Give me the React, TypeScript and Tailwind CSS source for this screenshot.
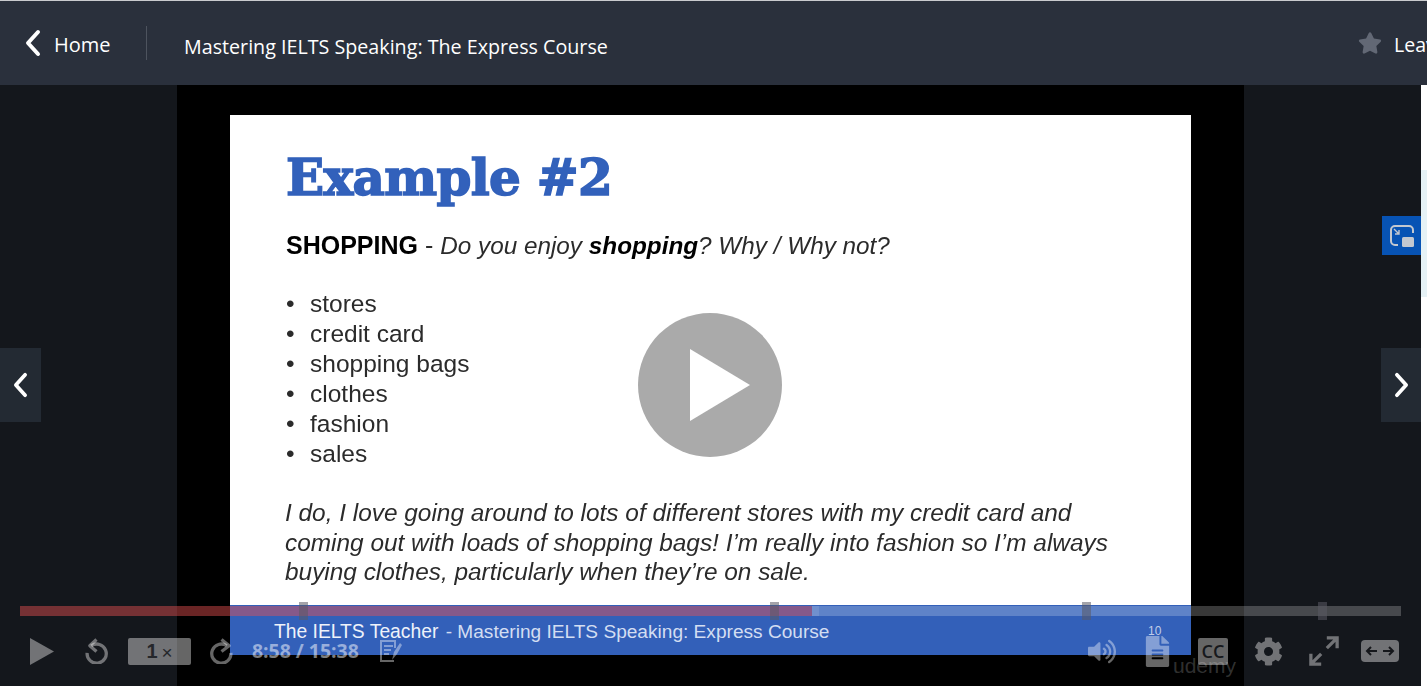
import { FaCog, FaFileAlt, FaStar, FaVolumeUp } from "react-icons/fa";

const bullets = ["stores", "credit card", "shopping bags", "clothes", "fashion", "sales"];
const markers = [303, 774, 1086, 1322];

function Chevron({ dir, className }: { dir: "left" | "right"; className: string }) {
  return (
    <svg viewBox="0 0 16 28" className={className} fill="none" stroke="currentColor" strokeWidth="4" strokeLinecap="round" strokeLinejoin="round">
      <path d={dir === "left" ? "M13 3 3 14l10 11" : "M3 3l10 11L3 25"} />
    </svg>
  );
}

function Header() {
  return (
    <header className="flex h-[85px] shrink-0 items-center overflow-hidden border-t border-[#c9cbce] bg-[#2a303c] font-['Open_Sans',sans-serif] text-white">
      <div className="flex h-[34px] w-[147px] shrink-0 items-center border-r border-[#4d535e] pl-6">
        <Chevron dir="left" className="h-[28px] w-[18px]" />
        <span className="ml-[12px] pt-[3px] text-[20px] leading-none">Home</span>
      </div>
      <h1 className="ml-[37px] whitespace-nowrap pt-[8px] text-[19.7px] font-normal leading-none">Mastering IELTS Speaking: The Express Course</h1>
      <div className="ml-auto flex w-[69px] shrink-0 items-center gap-[12px] overflow-hidden">
        <FaStar className="h-[24px] w-[24px] shrink-0 text-[#626875]" />
        <span className="whitespace-nowrap pt-[3px] text-[19.5px] leading-none">Leave a rating</span>
      </div>
    </header>
  );
}

function Slide() {
  return (
    <div className="flex h-[540px] w-[961px] flex-col bg-white font-['Liberation_Sans',sans-serif] text-[#2b2b2b]">
      <div className="flex-1 pl-[56px] pt-[30px] blur-[0.3px]">
        <h2 className="font-['DejaVu_Serif',serif] text-[50px] font-bold leading-[66px] tracking-[-0.7px] text-[#3261bb] [-webkit-text-stroke:1.6px_#3261bb]">Example #2</h2>
        <p className="mt-[19px] whitespace-nowrap text-[25px] leading-[30px]">
          <b className="text-black">SHOPPING</b> - <i className="text-[24.3px]">Do you enjoy <b className="text-black">shopping</b>? Why / Why not?</i>
        </p>
        <ul className="mt-[28px] text-[24.5px] leading-[30px]">
          {bullets.map((item) => (
            <li key={item} className="flex">
              <span className="w-[24px]">•</span>
              {item}
            </li>
          ))}
        </ul>
        <p className="mt-[29px] -ml-px whitespace-nowrap text-[24.4px] italic leading-[29.5px]">
          I do, I love going around to lots of different stores with my credit card and
          <br />
          coming out with loads of shopping bags! I’m really into fashion so I’m always
          <br />
          buying clothes, particularly when they’re on sale.
        </p>
      </div>
      <div className="h-[50px] shrink-0 whitespace-nowrap bg-[#3360b9] pl-[44px] pt-[16px] text-[19.1px] leading-[22px] text-[#d3def2]">
        <span className="mr-[2px] text-[19.3px] text-[#eef2fa]">The IELTS Teacher</span> - Mastering IELTS Speaking: Express Course
      </div>
    </div>
  );
}

function Controls() {
  return (
    <div className="absolute inset-x-0 bottom-0 h-[81px] font-['Liberation_Sans',sans-serif] text-white/40">
      {/* Progress */}
      <div className="relative mx-[20px] mt-[1px] flex h-[10px]">
        <div className="h-full w-[792px] bg-[rgba(236,82,82,0.45)]" />
        <div className="h-full w-[7px] bg-white/30" />
        <div className="h-full flex-1 bg-white/22" />
        {markers.map((x) => (
          <div key={x} className="absolute top-[-4px] h-[18px] w-[9px] bg-[rgba(90,90,100,0.55)]" style={{ left: x - 24 }} />
        ))}
      </div>

      <div className="relative flex h-[70px] items-center">
        <svg viewBox="0 0 24 27" className="ml-[30px] h-[27px] w-[24px]" fill="currentColor">
          <path d="M0 0v27l24-13.5z" />
        </svg>
        <svg viewBox="0 0 24 26" className="ml-[31px] h-[26px] w-[23px]" fill="none" stroke="currentColor" strokeWidth="3.4">
          <path d="M6.5 7.5A10 10 0 1 1 2.2 15" />
          <path d="M12 1 5 7.5l7 6" fill="none" strokeLinejoin="round" />
        </svg>
        <div className="ml-[20px] flex h-[27px] w-[63px] items-center justify-center rounded-[2px] bg-white/40 text-[20px] font-bold leading-none text-[#25272b]">
          1<span className="ml-[4px] mt-[3px] text-[19px] font-normal">×</span>
        </div>
        <svg viewBox="0 0 24 26" className="ml-[19px] h-[26px] w-[23px]" fill="none" stroke="currentColor" strokeWidth="3.4">
          <path d="M17.5 7.5A10 10 0 1 0 21.8 15" />
          <path d="M12 1l8 6.5-8 6" fill="none" strokeLinejoin="round" />
        </svg>
        <span className="ml-[19px] whitespace-nowrap font-['Open_Sans',sans-serif] text-[19.4px] font-bold leading-none text-white/50">8:58 / 15:38</span>
        <svg viewBox="0 0 24 24" className="ml-[20px] h-[24px] w-[24px]" fill="none" stroke="currentColor" strokeWidth="2">
          <path d="M15 22H2V2h14v7" />
          <path d="M5 7h9M5 11h7M5 15h5" />
          <path d="M13 21l2-8 6-9 2 2-5 9z" fill="currentColor" stroke="none" />
        </svg>

        <FaVolumeUp className="ml-auto h-[27px] w-[28px]" />
        <div className="relative ml-[28px] h-[31px] w-[27px]">
          <span className="absolute left-[4px] top-[-11px] text-[12px] leading-none text-white/70">10</span>
          <FaFileAlt className="h-[31px] w-[27px]" />
        </div>
        <div className="ml-[27px] flex h-[27px] w-[30px] items-center justify-center rounded-[2px] bg-white/40 font-['Open_Sans',sans-serif] text-[18px] font-semibold leading-none text-[#16181c]">
          CC
        </div>
        <FaCog className="ml-[26px] h-[29px] w-[29px]" />
        <svg viewBox="0 0 32 32" className="ml-[26px] h-[30px] w-[30px]" fill="none" stroke="currentColor" strokeWidth="3.5">
          <path d="M19 2h11v11M29 3 19 13M13 30H2V19M3 29l10-10" />
        </svg>
        <svg viewBox="0 0 38 22" className="ml-[22px] mr-[22px] h-[22px] w-[38px]">
          <rect width="38" height="22" rx="4" fill="currentColor" />
          <path d="M10 7l-4 4 4 4M6 11h10M28 7l4 4-4 4M32 11H22" fill="none" stroke="#15171b" strokeWidth="2" />
        </svg>

        <span className="absolute left-[1173px] top-[39px] text-[21px] leading-none text-white/20">udemy</span>
      </div>
    </div>
  );
}

export default function App() {
  return (
    <div className="flex h-[686px] w-[1427px] flex-col overflow-hidden bg-white">
      <Header />
      <div className="flex min-h-0 flex-1">
        <main className="relative flex w-[1421px] shrink-0 bg-[#14171c]">
          <div className="ml-[177px] flex w-[1067px] justify-center bg-black pt-[30px]">
            <Slide />
          </div>

          {/* Big play */}
          <div className="absolute left-[638px] top-[228px] flex h-[144px] w-[144px] items-center justify-center rounded-full bg-[#aaaaaa]">
            <svg viewBox="0 0 60 72" className="ml-[20px] h-[72px] w-[60px]" fill="white">
              <path d="M0 0v72l60-36z" />
            </svg>
          </div>

          <button className="absolute left-0 top-[263px] flex h-[74px] w-[41px] items-center justify-center bg-[#232a33] text-white">
            <Chevron dir="left" className="h-[26px] w-[15px]" />
          </button>
          <button className="absolute right-0 top-[263px] flex h-[74px] w-[40px] items-center justify-center bg-[#232a33] text-white">
            <Chevron dir="right" className="h-[26px] w-[15px]" />
          </button>
          <button className="absolute right-0 top-[131px] flex h-[39px] w-[39px] items-center justify-center bg-[#0753b4]">
            <svg viewBox="0 0 24 22" className="h-[22px] w-[24px]" fill="none" stroke="#c3c8d0" strokeWidth="2">
              <path d="M8 20H5a4 4 0 0 1-4-4V5a4 4 0 0 1 4-4h14a4 4 0 0 1 4 4v3" />
              <path d="M4 4l5 5M9 5v4H5" strokeWidth="1.4" />
              <rect x="12" y="12" width="12" height="10" rx="1.5" fill="#c3c8d0" stroke="none" />
            </svg>
          </button>

          <Controls />
        </main>
        <aside className="flex-1 pt-[85px]">
          <div className="h-[127px] bg-[#e6f2f6]" />
        </aside>
      </div>
    </div>
  );
}
